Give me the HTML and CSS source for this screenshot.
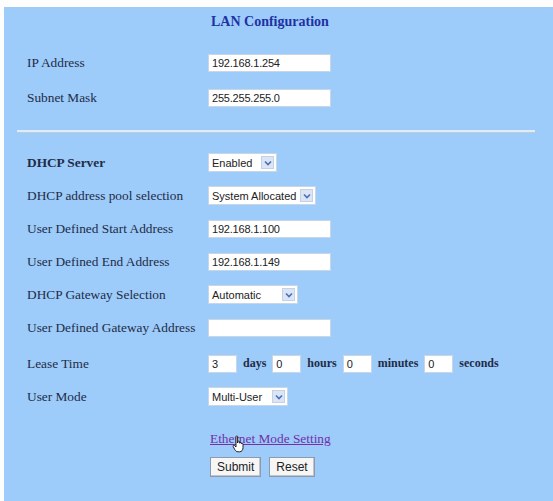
FILE: index.html
```html
<!DOCTYPE html>
<html>
<head>
<meta charset="utf-8">
<link rel="stylesheet" href="styles.css">
</head>
<body>
<div class="panel">
  <h1 class="title">LAN Configuration</h1>
  <div class="group top">
    <div class="row r35"><span class="label">IP Address</span><span class="input">192.168.1.254</span></div>
    <div class="row r35"><span class="label">Subnet Mask</span><span class="input">255.255.255.0</span></div>
  </div>
  <div class="rule"></div>
  <div class="group">
    <div class="row"><span class="label bold">DHCP Server</span><span class="select w69"><span class="val">Enabled</span><span class="arrow"><svg viewBox="0 0 10 10" width="10" height="10"><path d="M2 3.5 L5 6.5 L8 3.5" fill="none" stroke="#4a6fc0" stroke-width="1.6"/></svg></span></span></div>
    <div class="row"><span class="label">DHCP address pool selection</span><span class="select w108"><span class="val">System Allocated</span><span class="arrow"><svg viewBox="0 0 10 10" width="10" height="10"><path d="M2 3.5 L5 6.5 L8 3.5" fill="none" stroke="#4a6fc0" stroke-width="1.6"/></svg></span></span></div>
    <div class="row"><span class="label">User Defined Start Address</span><span class="input">192.168.1.100</span></div>
    <div class="row"><span class="label">User Defined End Address</span><span class="input">192.168.1.149</span></div>
    <div class="row"><span class="label">DHCP Gateway Selection</span><span class="select w90"><span class="val">Automatic</span><span class="arrow"><svg viewBox="0 0 10 10" width="10" height="10"><path d="M2 3.5 L5 6.5 L8 3.5" fill="none" stroke="#4a6fc0" stroke-width="1.6"/></svg></span></span></div>
    <div class="row"><span class="label">User Defined Gateway Address</span><span class="input"></span></div>
    <div class="row tall"><span class="label">Lease Time</span>
      <span class="lease">
        <span class="input small">3</span><b>days</b>
        <span class="input small">0</span><b>hours</b>
        <span class="input small">0</span><b>minutes</b>
        <span class="input small">0</span><b>seconds</b>
      </span>
    </div>
    <div class="row"><span class="label">User Mode</span><span class="select w80"><span class="val">Multi-User</span><span class="arrow"><svg viewBox="0 0 10 10" width="10" height="10"><path d="M2 3.5 L5 6.5 L8 3.5" fill="none" stroke="#4a6fc0" stroke-width="1.6"/></svg></span></span></div>
  </div>
  <div class="linkrow">
    <a class="link" href="#">Ethernet Mode Setting</a>
    <svg class="cursor" viewBox="0 0 14 18" width="14" height="18"><path d="M4 1.5 C4 0.8 5.6 0.8 5.6 1.5 L5.6 8 L6 6.5 C6.2 5.8 7.6 5.8 7.6 6.7 L7.6 8.2 C7.8 7.3 9.3 7.3 9.3 8.3 L9.3 9 C9.5 8.2 11 8.2 11 9.2 L11 12.5 C11 15 9.8 16.8 7.5 16.8 L6 16.8 C4.5 16.8 3.6 15.8 2.8 14.6 L1.2 11.5 C0.7 10.6 1.8 9.8 2.6 10.6 L4 12 Z" fill="#fff" stroke="#111" stroke-width="0.9"/></svg>
  </div>
  <div class="buttons">
    <span class="btn">Submit</span>
    <span class="btn">Reset</span>
  </div>
</div>
</body>
</html>
```

FILE: styles.css
```css
html, body {
  margin: 0;
  padding: 0;
  background: #fdfdfd;
}
body {
  width: 553px;
  height: 501px;
  overflow: hidden;
}
.panel {
  margin: 7px 0 0 4px;
  height: 494px;
  background: #9dcbfa;
  font-family: "Liberation Serif", "Times New Roman", serif;
  font-size: 13.33px;
  color: #222c46;
  position: relative;
  display: flex;
  flex-direction: column;
}
.title {
  margin: 0;
  padding: 5px 0 0 207px;
  height: 19px;
  line-height: 19px;
  font-size: 14px;
  font-weight: bold;
  color: #1d32a3;
}
.group {
  display: flex;
  flex-direction: column;
  padding-left: 23px;
}
.group.top {
  padding-top: 14px;
}
.row {
  display: flex;
  align-items: center;
  height: 33px;
}
.row.r35 {
  height: 35px;
}
.row.tall {
  height: 33px;
  margin-top: 3px;
}
.label {
  width: 181px;
  flex: none;
  white-space: nowrap;
}
.bold {
  font-weight: bold;
}
.input {
  box-sizing: border-box;
  width: 123px;
  height: 18px;
  background: #fff;
  border: 1px solid #c9d6e6;
  font-family: "Liberation Sans", Arial, sans-serif;
  font-size: 11px;
  line-height: 16px;
  padding-left: 3px;
  color: #222;
  letter-spacing: -0.2px;
}
.input.small {
  width: 29px;
}
.rule {
  margin: 15px 18px 13px 13px;
  height: 2px;
  background: #e2ecf6;
  border-bottom: 1px solid #b9cde2;
}
.select {
  box-sizing: border-box;
  height: 19px;
  background: #fff;
  border: 1px solid #c9d6e6;
  display: flex;
  align-items: center;
  justify-content: space-between;
  font-family: "Liberation Sans", Arial, sans-serif;
  font-size: 11px;
  color: #222;
  padding: 0 2px 0 3px;
}
.w69 { width: 69px; }
.w108 { width: 108px; }
.w90 { width: 90px; }
.w80 { width: 80px; }
.arrow {
  width: 13px;
  height: 13px;
  background: #dbe5f3;
  border: 1px solid #c3d2e8;
  box-sizing: border-box;
  display: flex;
  align-items: center;
  justify-content: center;
}
.lease {
  display: flex;
  align-items: center;
}
.lease b {
  margin: 0 6px 0 6px;
  font-size: 12px;
}
.linkrow {
  margin-top: 17px;
  padding-left: 206px;
  display: flex;
  position: relative;
  height: 18px;
}
.link {
  color: #7330a8;
  text-decoration: underline;
  font-size: 13.33px;
  line-height: 18px;
}
.cursor {
  position: absolute;
  left: 228px;
  top: 5px;
}
.buttons {
  margin-top: 9px;
  padding-left: 206px;
  display: flex;
  gap: 8px;
}
.btn {
  box-sizing: border-box;
  height: 20px;
  padding: 0 6px;
  background: #f6f6f6;
  border: 1px solid #8d9aab;
  box-shadow: inset -1px -1px 0 #c4c4c4;
  font-family: "Liberation Sans", Arial, sans-serif;
  font-size: 12px;
  line-height: 18px;
  color: #222;
}
```
